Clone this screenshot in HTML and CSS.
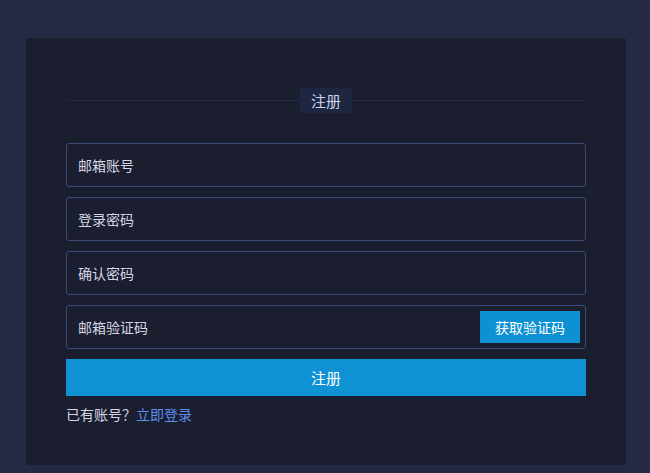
FILE: index.html
```html
<!DOCTYPE html>
<html lang="zh-CN">
<head>
  <meta charset="UTF-8" />
  <meta name="viewport" content="width=device-width, initial-scale=1.0"/>
  <title>注册</title>
  <link rel="stylesheet" href="styles.css">
</head>
<body>

  <!-- Register Card -->
  <div class="register-card">
    <div class="title-row">
      <span class="title">注册</span>
    </div>

    <form class="register-form" onsubmit="return false;">
      <input type="text" class="field" placeholder="邮箱账号" />
      <input type="password" class="field" placeholder="登录密码" />
      <input type="password" class="field" placeholder="确认密码" />
      <div class="field code-field">
        <input type="text" placeholder="邮箱验证码" />
        <button type="button" class="code-btn">获取验证码</button>
      </div>
      <button type="submit" class="submit-btn">注册</button>
    </form>

    <p class="login-tip">已有账号？<a href="#">立即登录</a></p>
  </div>

</body>
</html>
```

FILE: styles.css
```css
* {
  box-sizing: border-box;
}

body {
  margin: 0;
  padding: 38px 24px 0 26px;
  background: #252944;
  font-family: "Noto Sans CJK SC", "Noto Sans", sans-serif;
  color: #d3d7e6;
  height: 100vh;
  overflow: hidden;
}

.register-card {
  width: 600px;
  height: 427px;
  background: #1b1e2e;
  border-radius: 3px;
  padding: 50px 40px 0;
}

.title-row {
  position: relative;
  display: flex;
  justify-content: center;
  height: 25px;
  margin-bottom: 30px;
}

.title-row::before {
  content: "";
  position: absolute;
  left: 0;
  right: 0;
  top: 12px;
  height: 1px;
  background: #232a42;
}

.title {
  position: relative;
  width: 52px;
  height: 25px;
  line-height: 25px;
  text-align: center;
  background: #1e2641;
  color: #c9d5f0;
  font-size: 15px;
}

.register-form {
  display: flex;
  flex-direction: column;
  gap: 10px;
}

.field {
  height: 44px;
  border: 1px solid #3c4a78;
  border-radius: 3px;
  background: transparent;
  padding: 0 11px;
  font-family: inherit;
  font-size: 14px;
  color: #d3d7e6;
  outline: none;
}

.field::placeholder,
.code-field input::placeholder {
  color: #d3d7e6;
}

.code-field {
  display: flex;
  align-items: center;
  padding-right: 5px;
}

.code-field input {
  flex: 1;
  height: 100%;
  border: none;
  background: none;
  padding: 0;
  font-family: inherit;
  font-size: 14px;
  color: #d3d7e6;
  outline: none;
}

.code-btn {
  width: 100px;
  height: 32px;
  border: none;
  background: #0e91d3;
  color: #fff;
  font-family: inherit;
  font-size: 14px;
  cursor: pointer;
}

.submit-btn {
  height: 37px;
  border: none;
  background: #0e92d4;
  color: #fff;
  font-family: inherit;
  font-size: 15px;
  cursor: pointer;
}

.login-tip {
  margin: 8px 0 0;
  line-height: 20px;
  font-size: 14px;
  color: #d3d7e6;
}

.login-tip a {
  color: #5b8ef2;
  text-decoration: none;
}
```
